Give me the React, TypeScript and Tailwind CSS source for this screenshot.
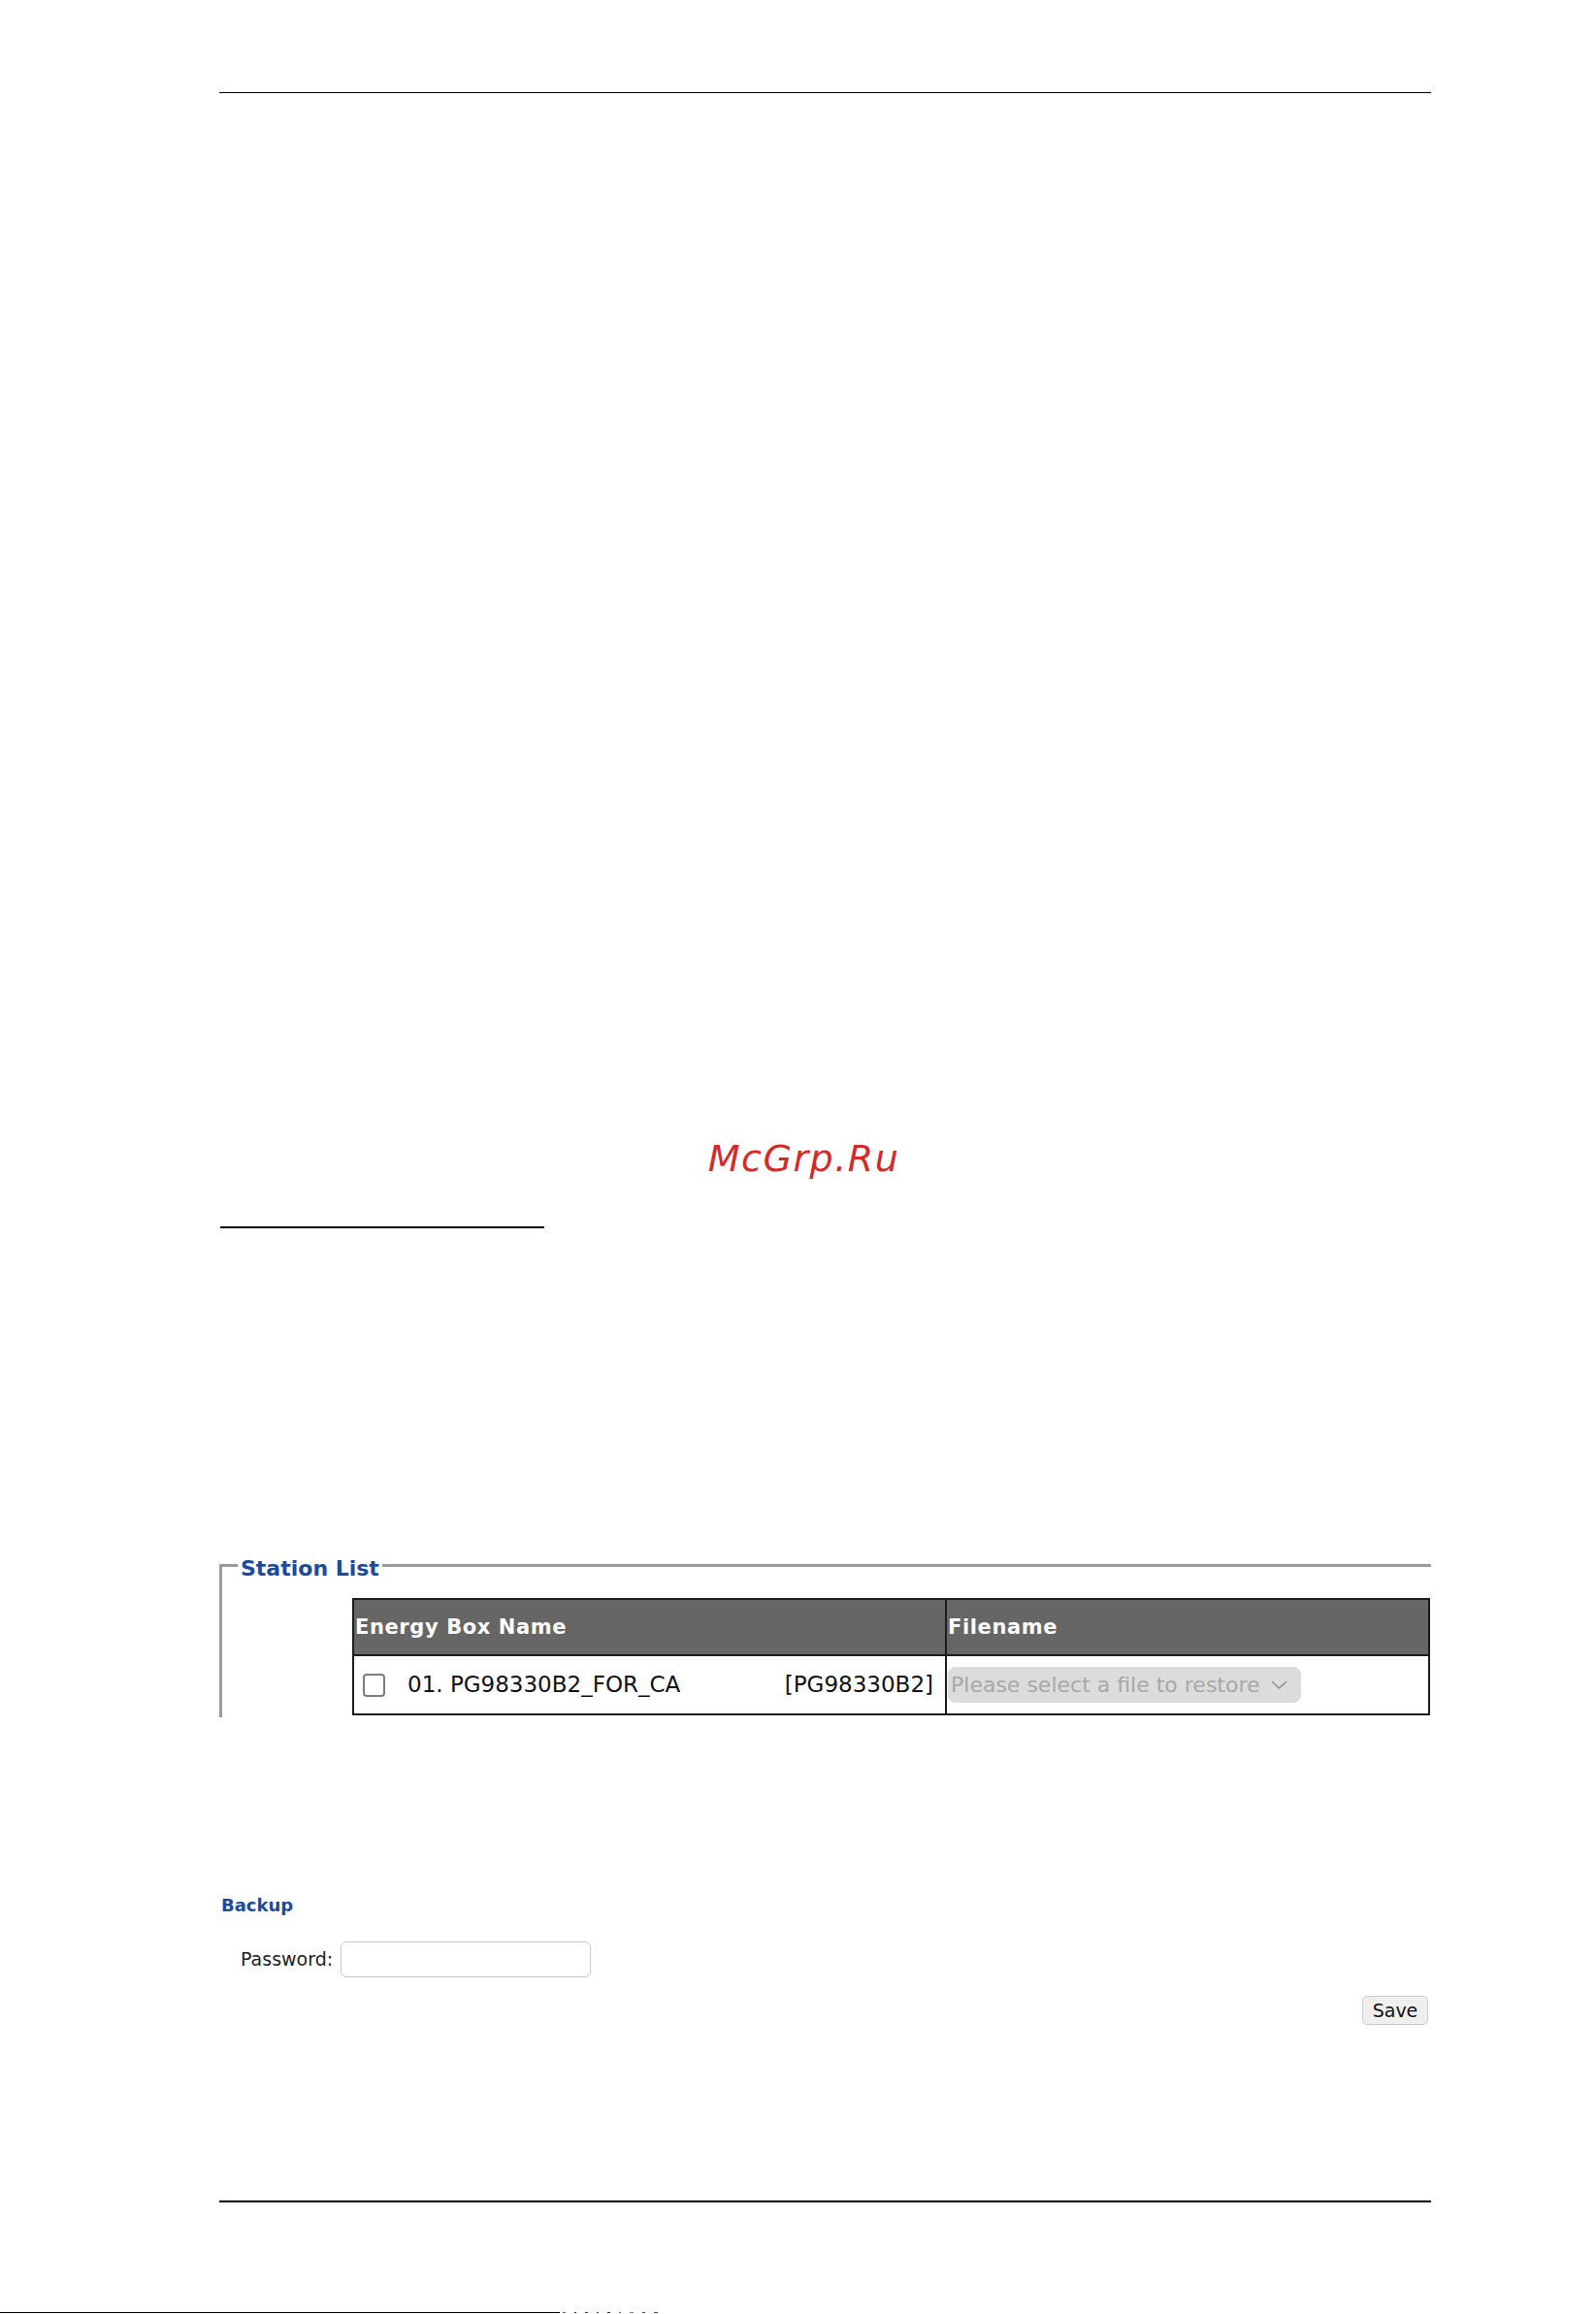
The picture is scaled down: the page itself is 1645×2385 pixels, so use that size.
import React from 'react';

const font = { fontFamily: '"DejaVu Sans", Verdana, sans-serif' };

const StationTable: React.FC = () => {
  return (
    <table className="ml-[134px] mt-[32px] w-[1109px] table-fixed border-collapse border-2 border-[#1c1c1c]">
      <colgroup>
        <col className="w-[611px]" />
        <col className="w-[498px]" />
      </colgroup>
      <thead>
        <tr className="bg-[#666666]">
          <th className="h-[58px] border-2 border-[#1c1c1c] pl-[1px] text-left align-middle text-[21px] font-bold leading-none tracking-[0.6px] text-white">
            Energy Box Name
          </th>
          <th className="h-[58px] border-2 border-[#1c1c1c] pl-[1px] text-left align-middle text-[21px] font-bold leading-none tracking-[0.6px] text-white">
            Filename
          </th>
        </tr>
      </thead>
      <tbody>
        <tr>
          <td className="h-[61px] border-2 border-[#1c1c1c] p-0 align-middle">
            <div className="flex items-center pl-[9px] pr-[12px]">
              <input
                type="checkbox"
                className="h-[24px] w-[23px] appearance-none rounded-[4px] border-2 border-[#7d7d7d] bg-white"
              />
              <span className="ml-[23px] text-[23px] leading-none text-[#111]">01. PG98330B2_FOR_CA</span>
              <span className="ml-auto text-[23px] leading-none text-[#111]">[PG98330B2]</span>
            </div>
          </td>
          <td className="h-[61px] border-2 border-[#1c1c1c] p-0 pl-[1px] align-middle">
            <div className="flex h-[37px] w-[364px] items-center rounded-[8px] bg-[#dcdcdc] pl-[3px]">
              <span className="text-[22px] leading-none text-[#a8a8a8]">Please select a file to restore</span>
              <svg className="ml-[11px]" width="17" height="9" viewBox="0 0 17 9" fill="none">
                <polyline points="1,1 8.5,8 16,1" stroke="#8a8a8a" strokeWidth="1.3" />
              </svg>
            </div>
          </td>
        </tr>
      </tbody>
    </table>
  );
};

const App: React.FC = () => {
  return (
    <div className="relative flex h-[2385px] w-[1645px] flex-col overflow-hidden bg-white pt-[95px]" style={font}>
      {/* page header rule */}
      <div className="ml-[226px] h-px w-[1249px] bg-black" />

      {/* watermark */}
      <div className="mt-[1079px] w-full pl-[12px] text-center text-[38px] italic leading-none tracking-[1.5px] text-[#d42a2a]">
        McGrp.Ru
      </div>

      <div className="ml-[227px] mt-[51px] h-[2px] w-[334px] bg-black" />

      {/* Station List */}
      <div className="relative ml-[226px] mt-[346px] w-[1249px] border-l-[3px] border-t-[3px] border-[#9a9a9a] pb-[2px]">
        <span className="absolute left-[16px] top-[-9px] bg-white px-[3px] text-[22px] font-bold leading-none text-[#1b4b9b]">
          Station List
        </span>
        <StationTable />
      </div>

      {/* Backup */}
      <div className="ml-[228px] mt-[185px] text-[18px] font-bold leading-none text-[#1b4b9b]">Backup</div>
      <div className="ml-[248px] mt-[28px] flex items-center">
        <label className="text-[19px] leading-none text-[#222]">Password:</label>
        <input
          type="password"
          className="ml-[8px] h-[37px] w-[258px] rounded-[6px] border border-[#c8c8c8] bg-white outline-none"
        />
      </div>
      <div className="ml-[226px] mt-[19px] flex w-[1249px] justify-end pr-[3px]">
        <button className="h-[30px] w-[68px] rounded-[5px] border border-[#cacaca] bg-[#efefef] text-[19px] leading-none text-[#111]">
          Save
        </button>
      </div>

      {/* page footer rule */}
      <div className="ml-[226px] mt-[181px] h-[2px] w-[1249px] bg-black" />

      <div className="mt-[113px] flex items-end">
        <div className="h-px w-[577px] bg-black" />
        <div className="ml-[3px] flex items-end gap-[9px]">
          <span className="h-px w-[3px] bg-[#2a7a9a]" />
          <span className="h-px w-[2px] bg-[#333]" />
          <span className="h-px w-[3px] bg-[#444]" />
          <span className="h-px w-[2px] bg-[#3a3ad0]" />
          <span className="h-px w-[3px] bg-[#333]" />
          <span className="h-px w-[2px] bg-[#2a8a5a]" />
          <span className="h-px w-[4px] bg-[#c08020]" />
          <span className="h-px w-[3px] bg-[#b03030]" />
          <span className="h-px w-[4px] bg-[#7a2a7a]" />
        </div>
      </div>
    </div>
  );
};

export default App;
